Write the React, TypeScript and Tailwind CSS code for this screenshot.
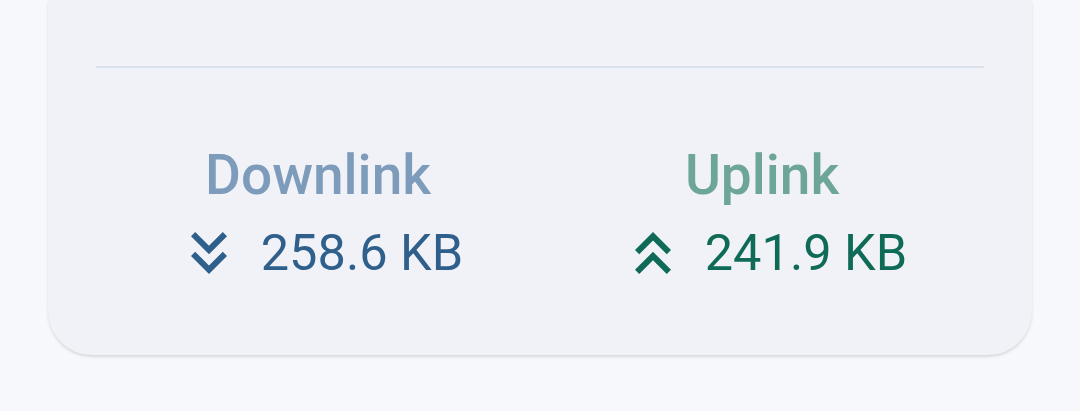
import React from "react";

type Stat = {
  label: string;
  value: string;
  direction: "down" | "up";
  labelColor: string;
  valueColor: string;
};

const STATS: Stat[] = [
  {
    label: "Downlink",
    value: "258.6 KB",
    direction: "down",
    labelColor: "text-[#7d9bbb]",
    valueColor: "text-[#2f5f8b]",
  },
  {
    label: "Uplink",
    value: "241.9 KB",
    direction: "up",
    labelColor: "text-[#6ea59a]",
    valueColor: "text-[#0f6b57]",
  },
];

// material "keyboard_double_arrow" glyphs
function DoubleArrow({ direction }: { direction: "down" | "up" }) {
  const d =
    direction === "down"
      ? "M18 6.41L16.59 5 12 9.58 7.41 5 6 6.41l6 6zM18 13l-1.41-1.41L12 16.17l-4.59-4.58L6 13l6 6z"
      : "M6 17.59L7.41 19 12 14.42 16.59 19 18 17.59l-6-6zM6 11l1.41 1.41L12 7.83l4.59 4.58L18 11l-6-6z";
  return (
    <svg viewBox="0 0 24 24" className="w-[72px] h-[72px] shrink-0" fill="currentColor">
      <path d={d} />
    </svg>
  );
}

function StatColumn({ stat }: { stat: Stat }) {
  return (
    <div className="flex flex-col items-center">
      <p className={`text-[55px] leading-[64px] font-medium ${stat.labelColor}`}>{stat.label}</p>
      <div className={`mt-[10px] flex items-center gap-[16px] ${stat.valueColor}`}>
        <DoubleArrow direction={stat.direction} />
        <span className="text-[50.5px] leading-[58px]">{stat.value}</span>
      </div>
    </div>
  );
}

export default function App() {
  return (
    <div
      className="min-h-[411px] bg-[#f7f8fc] px-[48px]"
      style={{ fontFamily: "Roboto, 'Noto Sans', sans-serif" }}
    >
      <div className="bg-[#f1f2f7] rounded-b-[44px] shadow-[0_2px_3px_rgba(0,0,0,0.12)] px-[48px] pt-[66px] pb-[66px]">
        <div className="h-[2px] bg-[#d9e1ec]" />
        <div className="mt-[75px] grid grid-cols-2">
          {STATS.map((s) => (
            <StatColumn key={s.label} stat={s} />
          ))}
        </div>
      </div>
    </div>
  );
}
